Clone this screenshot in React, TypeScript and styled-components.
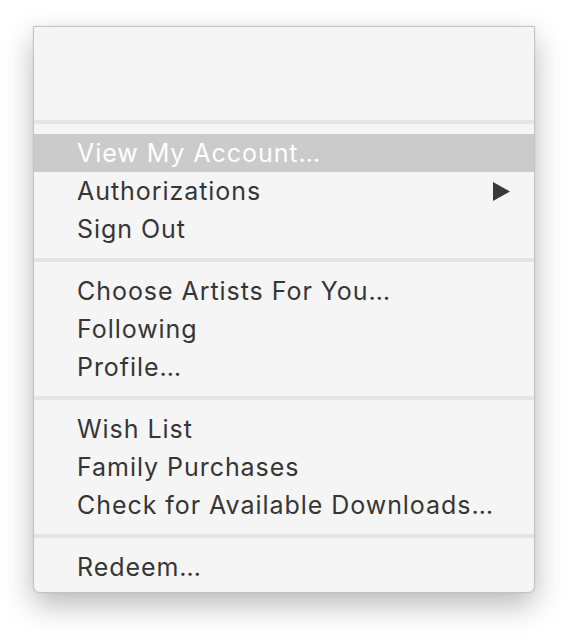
import React from "react";
import styled, { createGlobalStyle } from "styled-components";

const Global = createGlobalStyle`
  html, body { margin: 0; padding: 0; background: #ffffff; }
  body { font-family: Inter, "Liberation Sans", sans-serif; }
`;

const Page = styled.div`
  padding: 26px 0 0 33px;
  width: 568px;
  height: 636px;
  box-sizing: border-box;
`;

const Menu = styled.div`
  width: 502px;
  box-sizing: border-box;
  background: #f5f5f5;
  border: 1px solid #c4c4c4;
  border-radius: 0 0 7px 7px;
  box-shadow: 0 12px 30px rgba(0, 0, 0, 0.28), 0 0 2px rgba(0, 0, 0, 0.1);
  display: flex;
  flex-direction: column;
  overflow: hidden;
`;

const Header = styled.div`
  height: 93px;
`;

const Separator = styled.div`
  height: 4px;
  background: #e4e4e4;
`;

const Section = styled.div<{ $bottom?: number }>`
  display: flex;
  flex-direction: column;
  padding: 10px 0 ${(p) => (p.$bottom ?? 10)}px;
`;

const Row = styled.div<{ $active?: boolean }>`
  height: 38px;
  display: flex;
  align-items: center;
  justify-content: space-between;
  padding: 0 24px 0 43px;
  background: ${(p) => (p.$active ? "#cbcbcb" : "transparent")};
  color: ${(p) => (p.$active ? "#ffffff" : "#363636")};
  font-size: 25px;
  font-weight: 400;
  letter-spacing: 0.95px;
  white-space: nowrap;
`;

const Arrow = styled.svg`
  width: 17px;
  height: 19px;
  display: block;
`;

type Item = { label: string; active?: boolean; submenu?: boolean };

const groups: Item[][] = [
  [
    { label: "View My Account…", active: true },
    { label: "Authorizations", submenu: true },
    { label: "Sign Out" },
  ],
  [
    { label: "Choose Artists For You…" },
    { label: "Following" },
    { label: "Profile…" },
  ],
  [
    { label: "Wish List" },
    { label: "Family Purchases" },
    { label: "Check for Available Downloads…" },
  ],
  [{ label: "Redeem…" }],
];

export default function App() {
  return (
    <>
      <Global />
      <Page>
        <Menu>
          <Header />
          {groups.map((g, gi) => (
            <React.Fragment key={gi}>
              <Separator />
              <Section $bottom={gi === groups.length - 1 ? 6 : 10}>
                {g.map((it) => (
                  <Row key={it.label} $active={it.active}>
                    <span>{it.label}</span>
                    {it.submenu && (
                      <Arrow viewBox="0 0 17 19">
                        <path d="M0 0 L17 9.5 L0 19 Z" fill="#393939" />
                      </Arrow>
                    )}
                  </Row>
                ))}
              </Section>
            </React.Fragment>
          ))}
        </Menu>
      </Page>
    </>
  );
}
